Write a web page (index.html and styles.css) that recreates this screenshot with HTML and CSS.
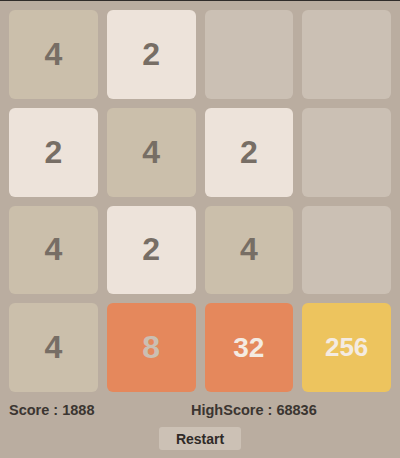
FILE: index.html
```html
<!DOCTYPE html>
<html lang="en">
  <head>
    <meta charset="UTF-8" />
    <meta name="viewport" content="width=device-width, initial-scale=1.0" />
    <title>2048</title>
    <link rel="stylesheet" href="styles.css">
  </head>
  <body>
    <div id="game">
      <div class="board">
        <div class="cell n4">4</div>
        <div class="cell n2">2</div>
        <div class="cell"></div>
        <div class="cell"></div>

        <div class="cell n2">2</div>
        <div class="cell n4">4</div>
        <div class="cell n2">2</div>
        <div class="cell"></div>

        <div class="cell n4">4</div>
        <div class="cell n2">2</div>
        <div class="cell n4">4</div>
        <div class="cell"></div>

        <div class="cell n4">4</div>
        <div class="cell n8">8</div>
        <div class="cell n32">32</div>
        <div class="cell n256">256</div>
      </div>

      <div class="scores">
        <span class="score">Score : 1888</span>
        <span class="high-score">HighScore : 68836</span>
      </div>

      <div class="controls">
        <button id="restart">Restart</button>
      </div>
    </div>
  </body>
</html>
```

FILE: styles.css
```css
body {
  margin: 0;
  background-color: #baada0;
  border-top: 1px solid #302c2a;
  font-family: "Liberation Sans", Arial, sans-serif;
  -webkit-user-select: none;
  user-select: none;
}
#game {
  width: 400px;
}
.board {
  display: grid;
  grid-template-columns: repeat(4, 1fr);
  gap: 9px;
  padding: 9px 9px 0 9px;
}
.cell {
  aspect-ratio: 1;
  border-radius: 6px;
  background: #cbc0b4;
  display: flex;
  justify-content: center;
  align-items: center;
  font-weight: bold;
  font-size: 32px;
  color: #776e65;
}
.n2 {
  background: #ede3da;
}
.n4 {
  background: #cbbfab;
}
.n8 {
  background: #e5885c;
  color: #cbbfb2;
}
.n32 {
  background: #e5885c;
  color: #f4ebe2;
  font-size: 28px;
}
.n256 {
  background: #edc45e;
  color: #f4ebe2;
  font-size: 26px;
}
.scores {
  display: flex;
  margin-top: 10px;
  padding-left: 9px;
  font-size: 14.5px;
  font-weight: bold;
  line-height: 16px;
  color: #3b3531;
}
.score {
  width: 182px;
}
.controls {
  display: flex;
  justify-content: center;
  margin-top: 9px;
}
#restart {
  width: 82px;
  height: 23px;
  padding: 0;
  border: none;
  border-radius: 3px;
  background: #ccc1b5;
  font-family: "Liberation Sans", Arial, sans-serif;
  font-size: 14px;
  font-weight: bold;
  color: #2f2a27;
}
```
